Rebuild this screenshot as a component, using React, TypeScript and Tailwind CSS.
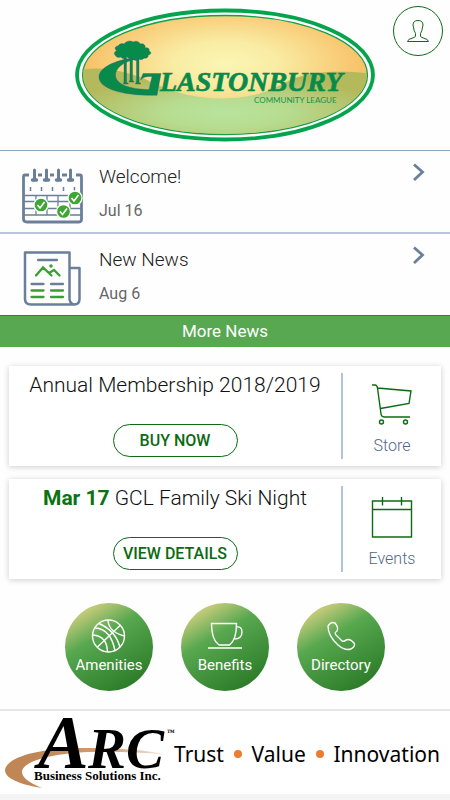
import type { ReactNode } from "react";

const GREEN = "#0a6b12";

function LeagueLogo() {
  return (
    <svg viewBox="75 8 300 134" className="w-[300px] h-[134px]" role="img" aria-label="Glastonbury Community League">
      <defs>
        <radialGradient id="sky" cx="0.5" cy="0.4" r="0.52">
          <stop offset="0" stopColor="#faf6b4" />
          <stop offset="0.35" stopColor="#f9eca4" />
          <stop offset="1" stopColor="#f8bd62" />
        </radialGradient>
        <radialGradient id="hill" cx="0.5" cy="0.6" r="0.52">
          <stop offset="0" stopColor="#b8e49c" />
          <stop offset="0.4" stopColor="#b7dc90" />
          <stop offset="1" stopColor="#b4b95c" />
        </radialGradient>
        <clipPath id="oval">
          <ellipse cx="225" cy="75" rx="142" ry="59" />
        </clipPath>
      </defs>
      <ellipse cx="225" cy="75" rx="148" ry="64.500" fill="#fff" stroke="#04a44c" strokeWidth="3.800" />
      <ellipse cx="225" cy="75" rx="142.500" ry="59.500" fill="url(#sky)" stroke="#12a04a" strokeWidth="1.300" />
      <g clipPath="url(#oval)">
        <path d="M75 71 C100 65 122 70 145 79 C175 94 195 98 222 98.500 C255 98 270 91 290 80 C310 71 342 70 375 74 V142 H75Z" fill="url(#hill)" />
      </g>
      <g fill="#088a4b" stroke="#31518a" strokeWidth="0.350">
        <path d="M136 57.500 C114 60 99 68 99 77 C99 89 124 96 157 95.300 L161 73.500 H143 L140.500 80 C143 77 147 76 152 76.500 L149 89.500 C134 89.500 117 86 115.500 76 C115 68 123 62 136 59Z" />
        <path d="M124 58h2.500v24l2 2h-5l.5-3zM130 56h2.500v24l1.500 2h-5l1-2zM136.500 57h2.500v25l2 2h-5.500l1-3z" />
        <path d="M115 55c-1.500-2 0-4 2-4-3-2-2-5 1-5 1-2 4-3 6-2 2-3 7-4 9-2 3-2 7 0 7 2 3-1 6 1 5 4 3-1 5 1 4 3 3 1 2 4-1 4 1 2-2 4-4 3-1 2-4 2-5 1-2 2-5 2-7-1-2 1-4 0-5-1-2 2-5 2-6 0-3 1-5 0-6-2z" />
        <text x="160" y="91" fontSize="28" fontWeight="700" fontStyle="italic" stroke="#088a4b" strokeWidth="0.600" className="font-['Liberation_Serif',serif]">LASTONBURY</text>
      </g>
      <text x="254" y="102.500" fontSize="8" fill="#16924c" className="font-[Lato,sans-serif]">COMMUNITY LEAGUE</text>
    </svg>
  );
}

function CalendarArt() {
  const check = (x: number, y: number) => (
    <g key={x}>
      <circle cx={x} cy={y} r="7" fill="#3fa535" stroke="#fff" strokeWidth="1.300" />
      <path d={`M${x - 3.5} ${y}l2.500 3 4.500-6`} fill="none" stroke="#fff" strokeWidth="1.600" />
    </g>
  );
  return (
    <svg viewBox="22 166 62 58" className="w-[62px] h-[58px]" aria-hidden="true">
      <g fill="none" stroke="#6a7f99">
        <path d="M29 174H25Q23.500 174 23.500 176V218Q23.500 221 27 221H79Q81.500 221 81.500 218V176Q81.500 174 80 174H76M38 174h4M50 174h4M62 174h5" strokeWidth="2.800" />
        <path d="M24 194.500H81M24 200.500H81M24 207.500H81M24 214H81M36 194v20M47 194v20M58 194v20M70 194v20" strokeWidth="1.300" />
        <path d="M30.500 186v4M41.500 186v4M52.500 186v4M63.500 186v4M74.500 186v4" strokeWidth="1.500" />
        <path d="M34.500 169v10M46.500 169v10M58.500 169v10M70.500 169v10" strokeWidth="3" strokeLinecap="round" />
        <path d="M32.500 179h4M44.500 179h4M56.500 179h4M68.500 179h4" strokeWidth="3.500" strokeLinecap="round" />
      </g>
      {check(75, 197)}
      {check(41, 204)}
      {check(63.5, 210.5)}
    </svg>
  );
}

function NewspaperArt() {
  return (
    <svg viewBox="22 250 62 58" className="w-[62px] h-[58px]" aria-hidden="true">
      <g fill="none" stroke="#6a7f99" strokeWidth="2.500" strokeLinejoin="round" strokeLinecap="round">
        <path d="M69.500 252.500H25V299Q25 304.500 31 304.500H74Q79.500 304.500 79.500 299V268H70M69.500 252.500V299Q70 304 75 304.500" />
        <path d="M38 260H57M31.500 284H43.500M51 284H63" strokeWidth="2.300" />
      </g>
      <g fill="none" stroke="#3a9e30" strokeWidth="2.300" strokeLinecap="round">
        <path d="M31.500 290.500H43.500M51 290.500H63M31.500 297H43.500M51 297H63" />
        <path d="M36 275.500L43 267.500L51.500 275.500M49 273L54 270L59.500 275.500" />
        <circle cx="51" cy="266" r="1" fill="#3a9e30" strokeWidth="1.500" />
      </g>
    </svg>
  );
}

function NewsRow({ title, date, art, line }: { title: string; date: string; art: ReactNode; line: string }) {
  return (
    <a href="#news" className={`flex pl-[22px] pr-6 ${line}`}>
      <span className="mt-4 h-[65px] shrink-0">{art}</span>
      <span className="ml-[15px] flex flex-1 flex-col pt-[14px] font-light">
        <span className="text-[19px] leading-6 text-[#222]">{title}</span>
        <span className="mt-3 text-[16px] font-normal leading-5 text-[#666]">{date}</span>
      </span>
      <svg viewBox="0 0 14 20" className="mt-[11px] h-5 w-[14px]" aria-hidden="true">
        <path d="M2 2.500L10.500 10L2 18" fill="none" stroke="#6a7f99" strokeWidth="2.800" />
      </svg>
    </a>
  );
}

function Card({ title, action, label, icon }: { title: ReactNode; action: string; label: string; icon: ReactNode }) {
  return (
    <section className="flex h-[100px] bg-white py-[7px] shadow-[0_1px_6px_rgba(0,0,0,0.2)]">
      <div className="flex flex-1 flex-col items-center">
        <h2 className="text-[21px] font-light leading-6 text-[#111]">{title}</h2>
        <button className="mt-[27px] h-[33px] w-[125px] rounded-full border border-[#0a6b12] text-[16px] font-medium text-[#0a6b12]">
          {action}
        </button>
      </div>
      <a href={`#${label}`} className="flex w-[100px] flex-col items-center border-l-2 border-[#b3c0d8] pt-[10px] text-[16px] font-light leading-5 text-[#52688a]">
        {icon}
        <span className="mt-[11px]">{label}</span>
      </a>
    </section>
  );
}

function CircleLink({ label, children }: { label: string; children: ReactNode }) {
  return (
    <a href={`#${label}`} className="flex size-[88px] flex-col items-center rounded-full bg-[linear-gradient(150deg,#ecd88a_5%,#58a850_38%,#20701f_100%)] pt-[15px] text-[15px] leading-[22px] text-white">
      <svg viewBox="0 0 36 36" className="size-9 overflow-visible" fill="none" stroke="#fff" strokeWidth="1.400" aria-hidden="true">
        {children}
      </svg>
      <span>{label}</span>
    </a>
  );
}

function ArcLogo() {
  return (
    <svg viewBox="0 711 178 83" className="h-[83px] w-[178px] shrink-0 overflow-visible" role="img" aria-label="ARC Business Solutions Inc.">
      <defs>
        <linearGradient id="swoosh">
          <stop offset="0.2" stopColor="#c08656" />
          <stop offset="0.65" stopColor="#d3a078" />
          <stop offset="1" stopColor="#f8eadc" />
        </linearGradient>
      </defs>
      <path d="M42 788C18 784 5 778 5 770C6 758 37 747 90 748Q137 748 166 754.500Q125 751 88 752C48 754 22 762 22 772Q22 780 42 788Z" fill="url(#swoosh)" />
      <g className="font-['Liberation_Serif',serif]" fontWeight="700">
        <text x="38" y="768" fontSize="76" fontStyle="italic">A</text>
        <text x="88" y="768" fontSize="57" fontStyle="italic">RC</text>
        <text x="34" y="780" fontSize="13" stroke="#fff" strokeWidth="1.500" paintOrder="stroke">Business Solutions Inc.</text>
        <text x="167" y="735" fontSize="8">™</text>
      </g>
    </svg>
  );
}

export default function App() {
  return (
    <main className="min-h-screen bg-[#fefefe] font-[Roboto,sans-serif]">
      <header className="relative flex h-[150px] justify-center pt-2">
        <LeagueLogo />
        <button aria-label="Profile" className="absolute right-[7px] top-[6px] flex size-[50px] items-center justify-center rounded-full border border-[#0a6b12] bg-white">
          <svg viewBox="0 0 24 24" className="size-6" fill="none" stroke={GREEN} strokeWidth="1" aria-hidden="true">
            <path d="M1.500 22.500H22.500Q22 20 18 19.200Q14.500 18.500 14.500 17V14.500Q16 12.500 17 6Q17 1.500 12 1.500T7 6Q8 12.500 9.500 14.500V17Q9.500 18.500 6 19.200Q2 20 1.500 22.500Z" />
          </svg>
        </button>
      </header>

      <nav aria-label="News">
        <NewsRow title="Welcome!" date="Jul 16" art={<CalendarArt />} line="border-t border-[#8ea3c0]" />
        <NewsRow title="New News" date="Aug 6" art={<NewspaperArt />} line="border-t-2 border-[#b9c6d9]" />
        <button className="flex h-8 w-full items-center justify-center border-t border-[#109c10] bg-[#57a850] text-[17px] text-white">
          More News
        </button>
      </nav>

      <div className="flex flex-col gap-[13px] px-[9px] pt-[19px]">
        <Card
          title="Annual Membership 2018/2019"
          action="BUY NOW"
          label="Store"
          icon={
            <svg viewBox="0 0 42 42" className="size-[42px]" fill="none" stroke={GREEN} strokeWidth="1.400" aria-hidden="true">
              <path d="M1 2H4Q6 2 6.500 5L10 31Q10.500 34 13 34H39M6.500 5L40 8L38 20.500L9.500 25.500" />
              <circle cx="10.500" cy="39" r="2" />
              <circle cx="34.500" cy="39" r="2" />
            </svg>
          }
        />
        <Card
          title={<><b className="font-bold text-[#0a7312]">Mar 17</b> GCL Family Ski Night</>}
          action="VIEW DETAILS"
          label="Events"
          icon={
            <svg viewBox="0 0 42 42" className="size-[42px]" fill="none" stroke={GREEN} strokeWidth="1.400" aria-hidden="true">
              <path d="M1.500 5H40.500V41H1.500ZM1.500 13.500H40.500M11.500 1V9.500M30.500 1V9.500" />
            </svg>
          }
        />
      </div>

      <nav aria-label="Sections" className="flex justify-center gap-7 pt-6">
        <CircleLink label="Amenities">
          <circle cx="17.500" cy="18" r="16" />
          <path d="M29.500 7L6.500 29M8 5.500Q25 13 29 29.500M17 2Q17.500 14 33.500 18M2 17Q16 18 16.500 34M4 10Q20 11 24 33" />
        </CircleLink>
        <CircleLink label="Benefits">
          <path d="M4.500 5.500H29.500Q29.500 22 22.500 27H12Q4.500 22 4.500 5.500ZM29 9Q35 8 35 14Q35 21 27 21M1 30H35" />
        </CircleLink>
        <CircleLink label="Directory">
          <path d="M5 8Q8 3 12 5Q16 10 14 13Q11 15 13 17L19 23Q21 24 23 22Q27 20 31 25Q33 28 28 31Q22 33 15 27Q5 18 5 8Z" />
        </CircleLink>
      </nav>

      <footer className="mt-[18px] border-b-[6px] border-t-2 border-b-[#f4f4f4] border-t-[#e6e6e6] bg-white">
        <a href="#sponsor" className="flex items-center text-black">
          <ArcLogo />
          <span className="-ml-1 flex flex-1 items-center justify-between pr-[10px] pt-[3px] font-['Noto_Sans',sans-serif] text-[21px] leading-7">
            <span>Trust</span>
            <span className="size-2 rounded-full bg-[#ee7c30]" />
            <span>Value</span>
            <span className="size-2 rounded-full bg-[#ee7c30]" />
            <span>Innovation</span>
          </span>
        </a>
      </footer>
    </main>
  );
}
